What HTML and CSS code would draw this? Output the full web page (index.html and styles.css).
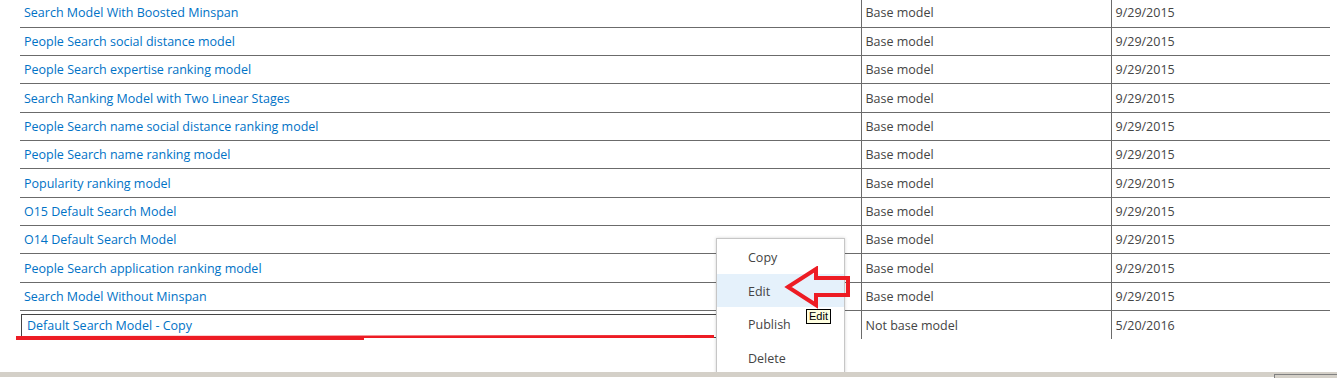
FILE: index.html
```html
<!DOCTYPE html>
<html lang="en">
<head>
    <meta charset="UTF-8">
    <title>Search Result Ranking Models</title>
    <link rel="stylesheet" href="styles.css">
</head>
<body>
    <div class="page">
        <table class="models">
            <colgroup>
                <col class="col-name">
                <col class="col-type">
                <col class="col-date">
            </colgroup>
            <tr><td><a href="#">Search Model With Boosted Minspan</a></td><td>Base model</td><td>9/29/2015</td></tr>
            <tr><td><a href="#">People Search social distance model</a></td><td>Base model</td><td>9/29/2015</td></tr>
            <tr><td><a href="#">People Search expertise ranking model</a></td><td>Base model</td><td>9/29/2015</td></tr>
            <tr><td><a href="#">Search Ranking Model with Two Linear Stages</a></td><td>Base model</td><td>9/29/2015</td></tr>
            <tr><td><a href="#">People Search name social distance ranking model</a></td><td>Base model</td><td>9/29/2015</td></tr>
            <tr><td><a href="#">People Search name ranking model</a></td><td>Base model</td><td>9/29/2015</td></tr>
            <tr><td><a href="#">Popularity ranking model</a></td><td>Base model</td><td>9/29/2015</td></tr>
            <tr><td><a href="#">O15 Default Search Model</a></td><td>Base model</td><td>9/29/2015</td></tr>
            <tr><td><a href="#">O14 Default Search Model</a></td><td>Base model</td><td>9/29/2015</td></tr>
            <tr><td><a href="#">People Search application ranking model</a></td><td>Base model</td><td>9/29/2015</td></tr>
            <tr><td><a href="#">Search Model Without Minspan</a></td><td>Base model</td><td>9/29/2015</td></tr>
            <tr class="selected"><td><span class="focus-box"><a href="#">Default Search Model - Copy</a></span></td><td>Not base model</td><td>5/20/2016</td></tr>
        </table>

        <!-- hand drawn annotation under the selected row -->
        <svg class="underline" width="710" height="8" viewBox="0 0 710 8">
            <path d="M0 2 L348 2 L348 6 L0 6 Z" fill="#ed1c24"/>
            <path d="M1 2 L698 1 L698 4 L348 4 L348 6 L1 6 Z" fill="#ed1c24"/>
        </svg>

        <ul class="menu">
            <li>Copy</li>
            <li class="active">Edit</li>
            <li>Publish</li>
            <li>Delete</li>
        </ul>

        <svg class="arrow" width="70" height="46" viewBox="0 0 70 46">
            <path d="M6 21 L34 3 L34 12 L66 12 L66 29 L34 29 L34 39 Z" fill="none" stroke="#ed1c24" stroke-width="4" stroke-linejoin="miter"/>
        </svg>

        <div class="tip">Edit</div>
    </div>

    <div class="hscroll"><div class="thumb"></div></div>
</body>
</html>
```

FILE: styles.css
```css
html, body {
    margin: 0;
    padding: 0;
    background: #fff;
    overflow: hidden;
}
body {
    font-family: "Open Sans", "Noto Sans", sans-serif;
    font-size: 12.5px;
    color: #444;
    height: 378px;
}
.page {
    position: relative;
    height: 373px;
}
.models {
    border-collapse: collapse;
    margin: -1px 0 0 20px;
    width: 1310px;
    table-layout: fixed;
}
.col-name { width: 841px; }
.col-type { width: 250px; }
.col-date { width: 219px; }
.models td {
    height: 28.33px;
    padding: 0 4px;
    border-bottom: 1px solid #6b6b6b;
    vertical-align: middle;
    white-space: nowrap;
    box-sizing: border-box;
}
.models td + td {
    border-left: 1px solid #6b6b6b;
}
.models tr:last-child td {
    border-bottom: none;
}
.models a {
    color: #0072c6;
    text-decoration: none;
}
.selected td:first-child {
    padding: 0;
}
.focus-box {
    display: block;
    width: 700px;
    margin: 1px 0 0 1px;
    height: 22px;
    line-height: 22px;
    padding-left: 5px;
    border: 1px solid #444;
    border-right: none;
}
.underline {
    position: absolute;
    left: 16px;
    top: 335px;
}
.menu {
    position: absolute;
    left: 716px;
    top: 239px;
    width: 127px;
    margin: 0;
    padding: 1px 0 0;
    list-style: none;
    background: #fff;
    border: 1px solid #c6c6c6;
    border-bottom: none;
    box-shadow: 0 0 3px rgba(0, 0, 0, 0.18);
}
.menu li {
    height: 33.5px;
    line-height: 35px;
    padding-left: 31px;
    color: #444;
}
.menu li.active {
    background: #e5f1fb;
}
.arrow {
    position: absolute;
    left: 782px;
    top: 267px;
}
.tip {
    position: absolute;
    left: 806px;
    top: 310px;
    padding: 0 2px;
    height: 13px;
    line-height: 13px;
    font-family: "Liberation Sans", sans-serif;
    font-size: 11px;
    color: #000;
    background: #ffffe1;
    border: 1px solid #000;
}
.hscroll {
    position: relative;
    height: 5px;
    background: #d4d0c8;
}
.thumb {
    position: absolute;
    left: 1274px;
    top: 2px;
    right: 0;
    height: 3px;
    background: #d4d0c8;
    border-top: 1px solid #808080;
    border-left: 1px solid #808080;
}
```
